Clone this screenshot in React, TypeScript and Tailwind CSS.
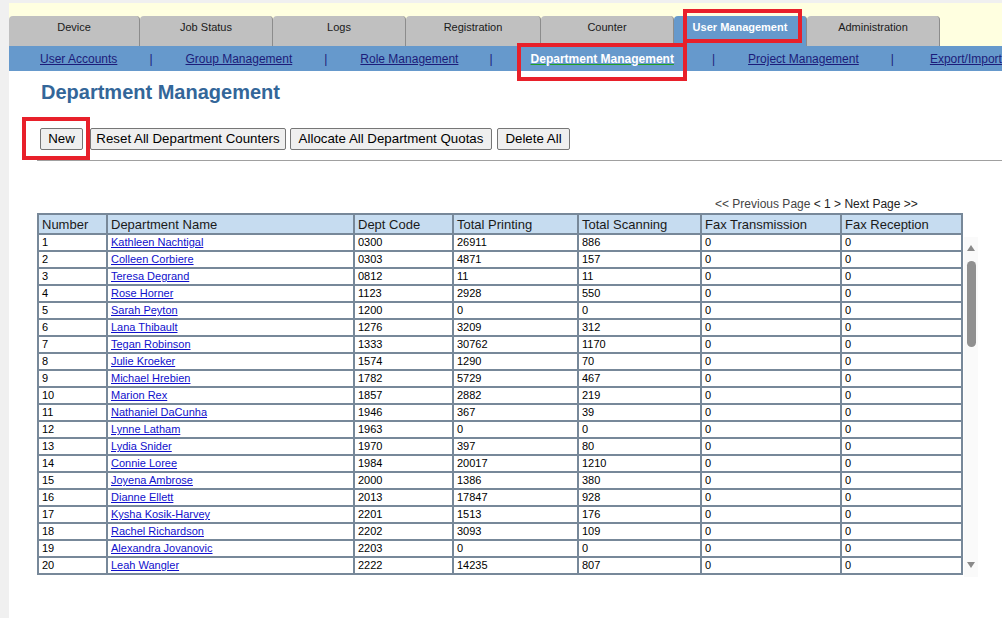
import React from "react";

const tabs = [
  { label: "Device", w: "w-[131px]" },
  { label: "Job Status", w: "w-[133px]" },
  { label: "Logs", w: "w-[133px]" },
  { label: "Registration", w: "w-[135px]" },
  { label: "Counter", w: "w-[133px]" },
  { label: "User Management", w: "w-[133px]", active: true },
  { label: "Administration", w: "w-[133px]" },
];

const rows: [string, string, string, string, string][] = [
  ["1", "Kathleen Nachtigal", "0300", "26911", "886"],
  ["2", "Colleen Corbiere", "0303", "4871", "157"],
  ["3", "Teresa Degrand", "0812", "11", "11"],
  ["4", "Rose Horner", "1123", "2928", "550"],
  ["5", "Sarah Peyton", "1200", "0", "0"],
  ["6", "Lana Thibault", "1276", "3209", "312"],
  ["7", "Tegan Robinson", "1333", "30762", "1170"],
  ["8", "Julie Kroeker", "1574", "1290", "70"],
  ["9", "Michael Hrebien", "1782", "5729", "467"],
  ["10", "Marion Rex", "1857", "2882", "219"],
  ["11", "Nathaniel DaCunha", "1946", "367", "39"],
  ["12", "Lynne Latham", "1963", "0", "0"],
  ["13", "Lydia Snider", "1970", "397", "80"],
  ["14", "Connie Loree", "1984", "20017", "1210"],
  ["15", "Joyena Ambrose", "2000", "1386", "380"],
  ["16", "Dianne Ellett", "2013", "17847", "928"],
  ["17", "Kysha Kosik-Harvey", "2201", "1513", "176"],
  ["18", "Rachel Richardson", "2202", "3093", "109"],
  ["19", "Alexandra Jovanovic", "2203", "0", "0"],
  ["20", "Leah Wangler", "2222", "14235", "807"],
];

const cols = [
  { label: "Number", w: "w-[69px]" },
  { label: "Department Name", w: "w-[247px]" },
  { label: "Dept Code", w: "w-[99px]" },
  { label: "Total Printing", w: "w-[125px]" },
  { label: "Total Scanning", w: "w-[123px]" },
  { label: "Fax Transmission", w: "w-[140px]" },
  { label: "Fax Reception", w: "w-[121px]" },
];

function Sep() {
  return <span className="text-[#1c1c7a]">|</span>;
}

const btn =
  "h-[22px] shrink-0 flex items-center justify-center bg-[#efefef] border border-[#767676] rounded-[2px]";

export default function App() {
  return (
    <div className="w-[1002px] h-[618px] overflow-hidden bg-[#f0f0f0] pl-[9px] pt-[3px] font-['Liberation_Sans',Arial,sans-serif]">
      <div className="relative h-full bg-white">
        {/* yellow band + tabs */}
        <div className="bg-[#ffffe0] pt-[13px] flex items-end h-[43px]">
          {tabs.map((t) => (
            <div
              key={t.label}
              className={`${t.w} h-[30px] shrink-0 flex items-start pt-[5px] justify-center rounded-t-[4px] border-r border-[#8c8c8c] text-[11px] leading-[13px] ${
                t.active
                  ? "bg-[#6699cc] text-white font-bold"
                  : "bg-[#c0c0c0] text-[#1a1a1a]"
              }`}
            >
              {t.label}
            </div>
          ))}
        </div>
        {/* subnav */}
        <div className="h-[25px] bg-[#6699cc] flex items-center pt-[1px] pl-[31px] text-[12px] whitespace-nowrap">
          <a className="underline text-[#1c1c7a]">User Accounts</a>
          <span className="ml-[32px] mr-[33px]"><Sep /></span>
          <a className="underline text-[#1c1c7a]">Group Management</a>
          <span className="ml-[32px] mr-[33px]"><Sep /></span>
          <a className="underline text-[#1c1c7a]">Role Management</a>
          <span className="ml-[31px] mr-[38px]"><Sep /></span>
          <a className="underline decoration-[#22a022] text-white font-bold">Department Management</a>
          <span className="ml-[38px] mr-[33px]"><Sep /></span>
          <a className="underline text-[#1c1c7a]">Project Management</a>
          <span className="ml-[32px] mr-[36px]"><Sep /></span>
          <a className="underline text-[#1c1c7a]">Export/Import</a>
        </div>

        {/* red highlight boxes */}
        <div className="absolute left-[674px] top-[6px] w-[119px] h-[34px] border-[4px] border-[#e8202a]" />
        <div className="absolute left-[508px] top-[40px] w-[170px] h-[38px] border-[4px] border-[#e8202a]" />

        {/* content */}
        <div className="pl-[32px] pt-[9px]">
          <h1 className="text-[20px] font-bold text-[#336699] leading-[24px]">Department Management</h1>
          <div className="relative mt-[24px] flex text-[13.3px] leading-[16px] text-black">
            <button className={`${btn} w-[43px] ml-[-1px]`}>New</button>
            <button className={`${btn} w-[196px] ml-[7px]`}>Reset All Department Counters</button>
            <button className={`${btn} w-[202px] ml-[4px]`}>Allocate All Department Quotas</button>
            <button className={`${btn} w-[73px] ml-[5px]`}>Delete All</button>
            <div className="absolute left-[-19px] top-[-11px] w-[68px] h-[43px] border-[4px] border-[#e8202a]" />
          </div>
          <div className="ml-[-4px] mt-[10px] h-[1px] bg-[#a0a0a0]" />

          <div className="mt-[36px] pl-[674px] text-[12px] leading-[14px] text-[#222]">
            <span className="text-[#444]">&lt;&lt; Previous Page</span> &lt; 1 &gt; Next Page &gt;&gt;
          </div>

          <div className="mt-[2px] ml-[-4px] flex items-start">
            <table className="border-collapse border-2 border-[#778899] table-fixed">
              <thead>
                <tr className="bg-[#c6dcf0] h-[20px]">
                  {cols.map((c) => (
                    <th
                      key={c.label}
                      className={`${c.w} border-2 border-[#778899] text-left font-normal text-[13px] leading-[15px] px-[3px] py-0 text-[#1a1a1a]`}
                    >
                      {c.label}
                    </th>
                  ))}
                </tr>
              </thead>
              <tbody>
                {rows.map((r) => (
                  <tr key={r[0]} className="h-[17px] text-[11px] leading-[13px]">
                    <td className="border-2 border-[#778899] px-[3px] py-0">{r[0]}</td>
                    <td className="border-2 border-[#778899] px-[3px] py-0">
                      <a className="underline text-[#1010cc]">{r[1]}</a>
                    </td>
                    <td className="border-2 border-[#778899] px-[3px] py-0">{r[2]}</td>
                    <td className="border-2 border-[#778899] px-[3px] py-0">{r[3]}</td>
                    <td className="border-2 border-[#778899] px-[3px] py-0">{r[4]}</td>
                    <td className="border-2 border-[#778899] px-[3px] py-0">0</td>
                    <td className="border-2 border-[#778899] px-[3px] py-0">0</td>
                  </tr>
                ))}
              </tbody>
            </table>
            {/* scrollbar */}
            <div className="ml-[1px] mt-[24px] w-[14px] h-[340px] bg-[#fafafa] flex flex-col items-center">
              <svg width="10" height="8" viewBox="0 0 10 8" className="mt-[7px]">
                <polygon points="5,1 9,7 1,7" fill="#8a8a8a" />
              </svg>
              <div className="mt-[9px] w-[9px] h-[86px] rounded-[5px] bg-[#909090]" />
              <div className="flex-1" />
              <svg width="10" height="8" viewBox="0 0 10 8" className="mb-[8px]">
                <polygon points="1,1 9,1 5,7" fill="#8a8a8a" />
              </svg>
            </div>
          </div>
        </div>
      </div>
    </div>
  );
}
